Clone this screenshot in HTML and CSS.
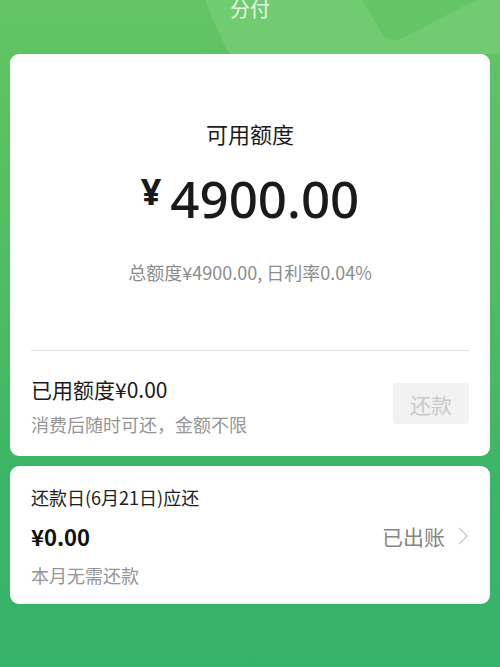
FILE: index.html
```html
<!DOCTYPE html>
<html lang="zh-CN">
<head>
<meta charset="utf-8">
<title>分付</title>
<link rel="stylesheet" href="styles.css">
</head>
<body>
<div class="page">
  <header class="header">
    <svg class="deco" width="500" height="54" viewBox="0 0 500 54">
      <circle cx="500" cy="-100" r="311" fill="#71cb71"/>
      <path d="M362,0 L382,33 Q389,45 402,38 L476,0 Z" fill="#63c563"/>
    </svg>
    <div class="title">分付</div>
  </header>

  <section class="card main">
    <div class="label">可用额度</div>
    <div class="amount"><span class="yen">¥</span><span class="num">4900.00</span></div>
    <div class="sub">总额度¥4900.00, 日利率0.04%</div>
    <div class="divider"></div>
    <div class="used">
      <div class="used-text">
        <div class="used-title">已用额度¥0.00</div>
        <div class="hint">消费后随时可还，金额不限</div>
      </div>
      <div class="btn">还款</div>
    </div>
  </section>

  <section class="card bill">
    <div class="bill-title">还款日(6月21日)应还</div>
    <div class="bill-row">
      <div class="bill-amount">¥0.00</div>
      <div class="status">已出账
        <svg class="chev" width="12" height="20" viewBox="0 0 12 20"><path d="M2 2 L10 10 L2 18" fill="none" stroke="#d0d0d0" stroke-width="1.6"/></svg>
      </div>
    </div>
    <div class="hint">本月无需还款</div>
  </section>
</div>
</body>
</html>
```

FILE: styles.css
```css
html, body {
  margin: 0;
  padding: 0;
}
body {
  font-family: "Noto Sans CJK SC", "Noto Sans", sans-serif;
  color: #1c1c1c;
  background: linear-gradient(180deg, #63c564 0px, #5ec262 90px, #4bbb64 330px, #3cb567 480px, #36b36a 667px);
  min-height: 667px;
}
.page {
  width: 500px;
  height: 667px;
  overflow: hidden;
}
.header {
  position: relative;
  height: 54px;
  overflow: hidden;
}
.deco {
  position: absolute;
  left: 0;
  top: 0;
}
.title {
  position: relative;
  text-align: center;
  font-size: 20px;
  line-height: 24px;
  margin-top: -3px;
  color: #eaf7ea;
}
.card {
  background: #fff;
  margin: 0 10px;
  border-radius: 9px;
  padding: 0 21px;
}
.main {
  height: 402px;
  box-sizing: border-box;
  padding-top: 64px;
}
.label {
  text-align: center;
  font-size: 22px;
  line-height: 30px;
  color: #1c1c1c;
}
.amount {
  margin-top: 20px;
  height: 60px;
  display: flex;
  justify-content: center;
  align-items: flex-start;
  gap: 9px;
  color: #1a1a1a;
}
.yen {
  font-family: "Noto Sans", sans-serif;
  font-weight: 700;
  font-size: 36px;
  line-height: 48px;
}
.num {
  font-family: "Noto Sans", sans-serif;
  font-weight: 500;
  font-size: 51px;
  line-height: 60px;
}
.sub {
  margin-top: 31px;
  text-align: center;
  font-size: 18px;
  line-height: 26px;
  color: #8c8c8c;
}
.divider {
  margin-top: 65px;
  height: 1px;
  background: #e2e2e2;
}
.used {
  margin-top: 23px;
  display: flex;
  justify-content: space-between;
  align-items: center;
}
.used-title {
  font-size: 21px;
  line-height: 30px;
  color: #1a1a1a;
}
.hint {
  margin-top: 7px;
  font-size: 18px;
  line-height: 26px;
  color: #959595;
}
.btn {
  width: 76px;
  height: 41px;
  margin-top: -4px;
  background: #f2f2f2;
  border-radius: 4px;
  color: #c9c9c9;
  font-size: 21px;
  display: flex;
  align-items: center;
  justify-content: center;
}
.bill {
  margin-top: 10px;
  height: 138px;
  box-sizing: border-box;
  padding-top: 18px;
}
.bill-title {
  font-size: 18px;
  line-height: 26px;
  color: #1e1e1e;
}
.bill-row {
  margin-top: 11px;
  display: flex;
  justify-content: space-between;
  align-items: center;
  height: 30px;
}
.bill-amount {
  font-size: 22px;
  font-weight: 700;
  line-height: 30px;
  color: #111;
}
.status {
  display: flex;
  align-items: center;
  gap: 12px;
  font-size: 21px;
  color: #858585;
}
.bill .hint {
  margin-top: 11px;
}
```
